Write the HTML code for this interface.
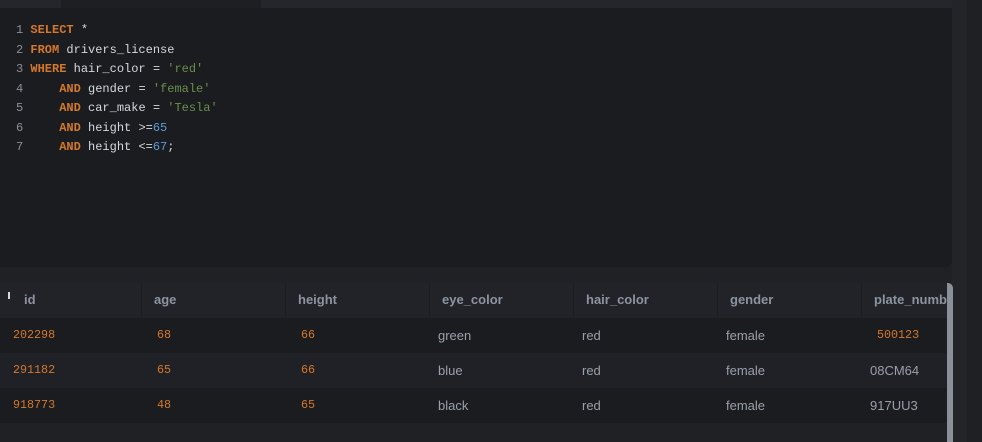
<!DOCTYPE html>
<html><head><style>
body{margin:0;width:982px;height:442px;background:#202125;position:relative;overflow:hidden;font-family:"Liberation Sans",sans-serif}
.abs{position:absolute}
.code{font-family:"Liberation Mono",monospace;font-size:12px;color:#d4d8de;white-space:pre;line-height:19.5px}
.k{color:#d4782c;font-weight:bold}.s{color:#6a8f4a}.n{color:#5a9bd5}.ln{color:#8a9099}
.th{position:absolute;top:283px;height:35px;background:#222328;border-right:1px solid #1c1d21;font-weight:bold;font-size:13px;color:#8b949f;line-height:33px}
.row{position:absolute;left:0;width:947px;height:35px}
.c{position:absolute;line-height:35px;font-size:13px;color:#98a0a9}
.m{font-family:"Liberation Mono",monospace;font-size:11.7px;color:#d4782c}
</style></head><body>
<div class="abs" style="left:0;top:0;width:61px;height:8px;background:#25262b"></div>
<div class="abs" style="left:61px;top:0;width:200px;height:8px;background:#1e1f23"></div>
<div class="abs" style="left:261px;top:0;width:691px;height:8px;background:#25262b"></div>
<div class="abs" style="left:0;top:8px;width:952px;height:259px;background:#1b1c20;border-bottom-right-radius:6px"></div>
<div class="abs" style="left:952px;top:0;width:15px;height:442px;background:#232428"></div>
<div class="abs" style="left:967px;top:0;width:15px;height:442px;background:#1f2024"></div>
<div class="abs code" style="left:16px;top:21px"><span class="ln">1</span> <span class="k">SELECT</span> *
<span class="ln">2</span> <span class="k">FROM</span> drivers_license
<span class="ln">3</span> <span class="k">WHERE</span> hair_color = <span class="s">'red'</span>
<span class="ln">4</span>     <span class="k">AND</span> gender = <span class="s">'female'</span>
<span class="ln">5</span>     <span class="k">AND</span> car_make = <span class="s">'Tesla'</span>
<span class="ln">6</span>     <span class="k">AND</span> height &gt;=<span class="n">65</span>
<span class="ln">7</span>     <span class="k">AND</span> height &lt;=<span class="n">67</span>;</div>

<div class="th" style="left:0;width:141px"><span style="position:absolute;left:8px;top:9px;width:2px;height:7px;background:#cfd9e6"></span><span style="position:absolute;left:24px">id</span></div>
<div class="th" style="left:142px;width:143px"><span style="position:absolute;left:12px">age</span></div>
<div class="th" style="left:286px;width:143px"><span style="position:absolute;left:12px">height</span></div>
<div class="th" style="left:430px;width:143px"><span style="position:absolute;left:12px">eye_color</span></div>
<div class="th" style="left:574px;width:143px"><span style="position:absolute;left:12px">hair_color</span></div>
<div class="th" style="left:718px;width:143px"><span style="position:absolute;left:12px">gender</span></div>
<div class="th" style="left:862px;width:85px;overflow:hidden;border:0"><span style="position:absolute;left:12px;white-space:nowrap">plate_number</span></div>

<div class="row" style="top:318px;background:#1b1c20">
<span class="c m" style="left:13px">202298</span><span class="c m" style="left:157px">68</span><span class="c m" style="left:301px">66</span>
<span class="c" style="left:438px">green</span><span class="c" style="left:582px">red</span><span class="c" style="left:726px">female</span><span class="c m" style="left:877px">500123</span></div>
<div class="row" style="top:353px;background:#202126">
<span class="c m" style="left:13px">291182</span><span class="c m" style="left:157px">65</span><span class="c m" style="left:301px">66</span>
<span class="c" style="left:438px">blue</span><span class="c" style="left:582px">red</span><span class="c" style="left:726px">female</span><span class="c" style="left:870px">08CM64</span></div>
<div class="row" style="top:388px;background:#1b1c20">
<span class="c m" style="left:13px">918773</span><span class="c m" style="left:157px">48</span><span class="c m" style="left:301px">65</span>
<span class="c" style="left:438px">black</span><span class="c" style="left:582px">red</span><span class="c" style="left:726px">female</span><span class="c" style="left:870px">917UU3</span></div>
<div class="abs" style="left:947px;top:283px;width:6px;height:159px;background:#8a9099;border-top-right-radius:5px"></div>
</body></html>
